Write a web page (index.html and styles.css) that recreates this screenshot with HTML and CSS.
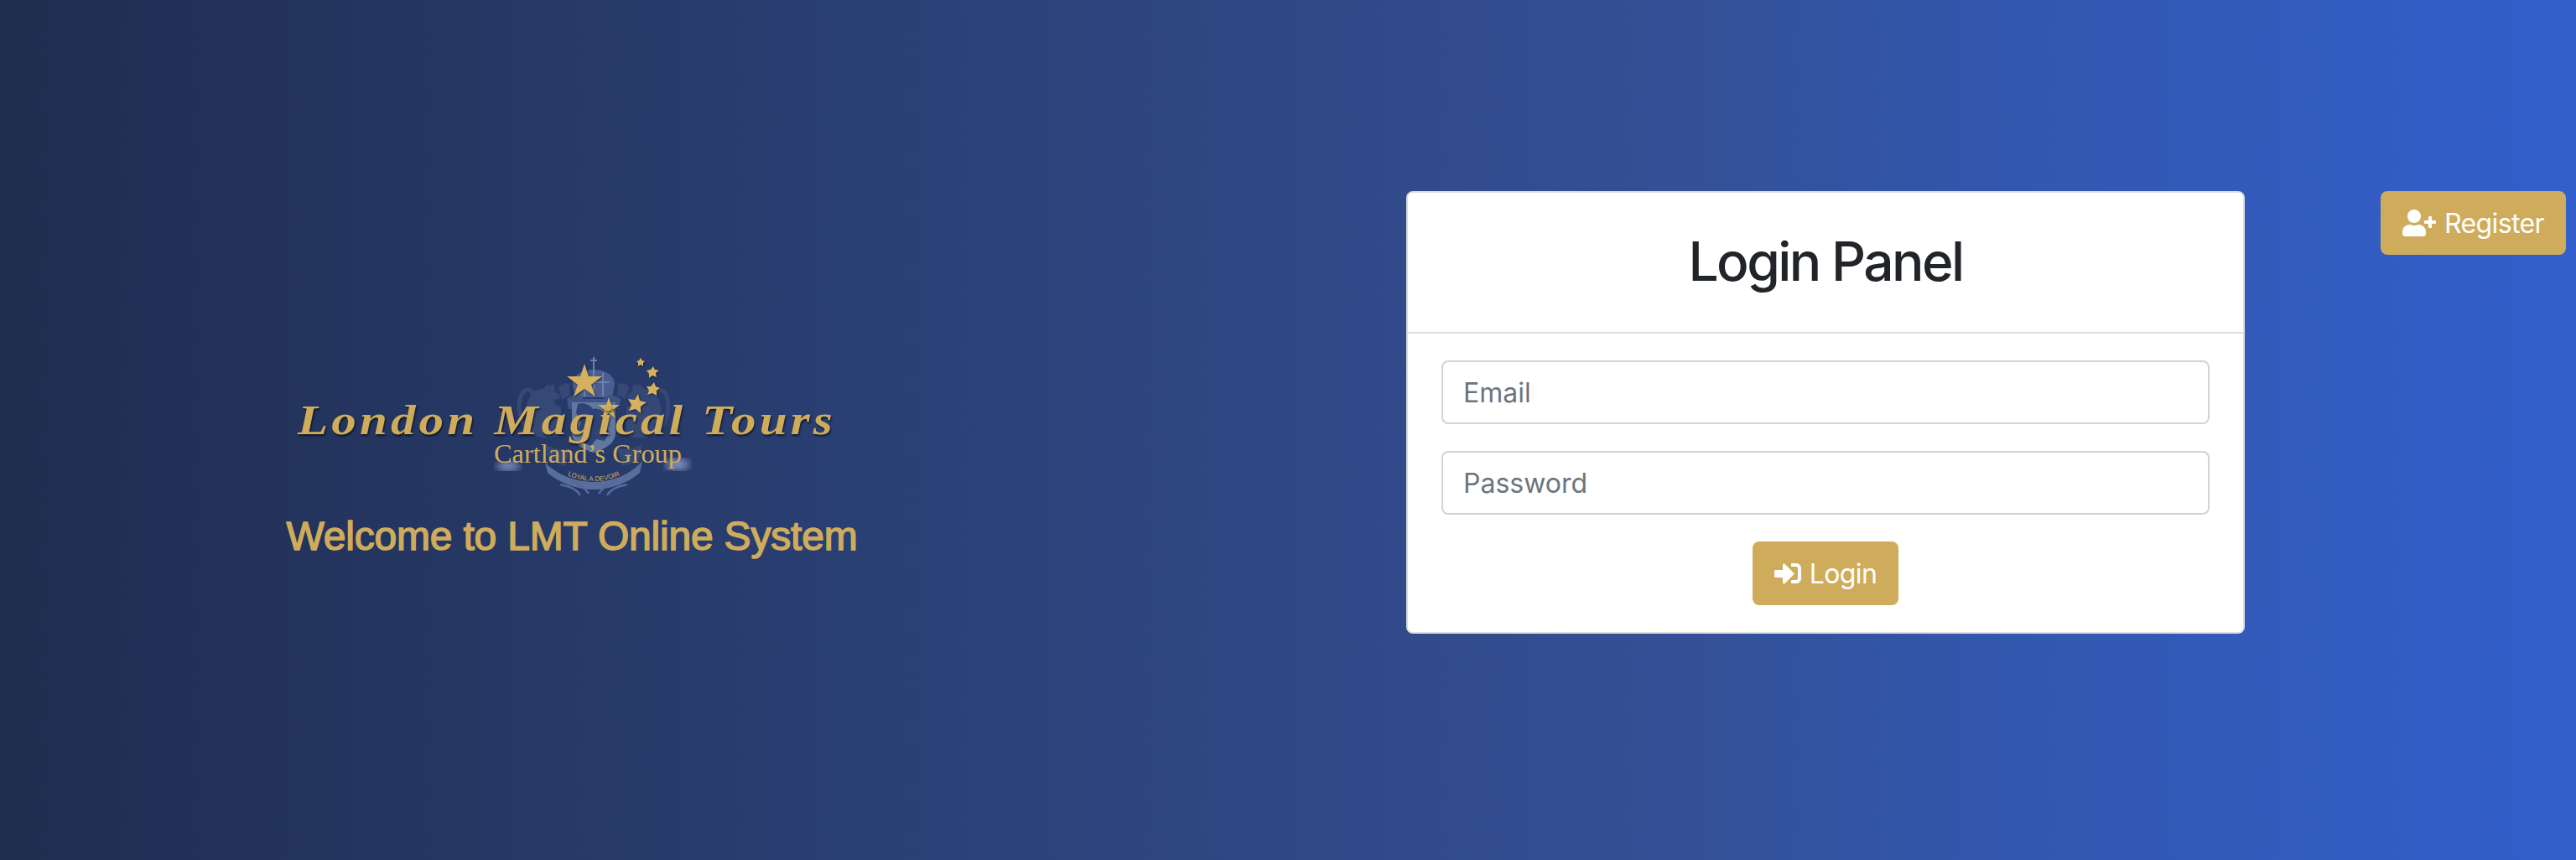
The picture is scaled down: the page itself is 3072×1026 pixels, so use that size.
FILE: index.html
```html
<!DOCTYPE html>
<html lang="en">
<head>
<meta charset="UTF-8">
<meta name="viewport" content="width=device-width, initial-scale=1.0">
<title>LMT Online System</title>
<link rel="stylesheet" href="styles.css">
</head>
<body>

<div class="page">
    <div class="brand">
        <svg class="logo" viewBox="345 420 660 180" width="660" height="180">
            <defs>
                <g id="lion">
                    <path d="M650 462l3-4 3 3 3-3 3 4-1 5c6 2 8 6 6 9l-6 1c-1 5 4 8 8 9v34c-10 2-20 4-30 0l-8-4 6-10c-10-8-12-18-6-30 2-8 8-12 16-12z"/>
                    <path class="tail" d="M632 512c-16-8-16-40-6-46 6-3 10 2 10 8"/>
                    <path d="M666 462c3-4 9-6 13-4l1 14-10 4z"/>
                    <path d="M650 530c10 6 24 8 30 4l-6 22-20-6z"/>
                </g>
                <filter id="blur"><feGaussianBlur stdDeviation="5"/></filter>
                <path id="motto" d="M656 553c15 13 32 21 52 21s37-8 52-21"/>
            </defs>

            <!-- crest -->
            <g class="crest">
                <use href="#lion"/>
                <use href="#lion" transform="translate(1416 0) scale(-1 1)"/>
                <path class="crown" d="M683 458c0-10 11-17 25-17s25 7 25 17l-3 16h-44z"/>
                <path class="crown-line" d="M708 426v15M704 430h8M689 456h38M697 445v28M708 441v32M719 445v28"/>
                <path class="mantle" d="M676 476c8-6 16-6 20 0h24c4-6 12-6 20 0l-2 12h-60z"/>
                <path class="shield" d="M682 480h52v36c0 14-14 20-26 24-12-4-26-10-26-24z"/>
                <path class="shield-lion" d="M689 482c6-2 14 0 18 6 8-2 16 4 18 12l-6 6 8 10-6 10-10-2-6 8-10-4 2-10-8-6 4-8-6-12z"/>
                <path class="ribbon" d="M650 552c14 14 36 23 58 23s44-9 58-25l-3 14c-14 12-34 20-55 20s-41-8-55-20z"/>
                <path class="scroll" d="M668 578c12 2 20 6 24 13M680 574c10 3 18 8 22 15M748 578c-12 2-20 6-24 13M736 574c-10 3-18 8-22 15"/>
            </g>
            <ellipse class="glow" cx="606" cy="556" rx="14" ry="5" filter="url(#blur)"/>
            <ellipse class="glow" cx="808" cy="554" rx="14" ry="6" filter="url(#blur)"/>

            <text class="motto"><textPath href="#motto" startOffset="50%" text-anchor="middle">LOYAL A DEVOIR</textPath></text>

            <!-- stars -->
            <g class="stars">
                <polygon points="697,434 702,449 718,449 705,459 710,473 697,464 684,473 689,459 676,449 692,449"/>
                <polygon points="726,474 729,483 739,483 731,489 734,499 726,493 718,499 721,489 713,483 723,483"/>
                <polygon points="761,470 763,478 771,480 764,485 764,493 758,488 750,490 753,483 749,476 757,477"/>
                <polygon points="780,456 782,461 787,463 783,466 783,472 778,469 772,471 774,466 771,461 776,461"/>
                <polygon points="779,437 781,441 786,442 782,445 783,450 778,448 774,451 774,446 771,442 776,441"/>
                <polygon points="764,427 766,430 769,431 767,433 767,437 764,435 761,437 761,433 759,431 762,430"/>
            </g>

            <text class="logo-name" x="355" y="518" textLength="642" lengthAdjust="spacingAndGlyphs">London Magical Tours</text>
            <text class="logo-group" x="589" y="552" textLength="224" lengthAdjust="spacingAndGlyphs">Cartland’s Group</text>
        </svg>
        <h3 class="welcome">Welcome to LMT Online System</h3>
    </div>

    <div class="panel">
        <div class="card-head">
            <h2>Login Panel</h2>
        </div>
        <form class="card-body">
            <input type="email" class="field" placeholder="Email">
            <input type="password" class="field" placeholder="Password">
            <button type="submit" class="gold-btn">
                <svg class="icon login-icon" viewBox="0 0 512 512"><path d="M416 448h-84c-6.600 0-12-5.400-12-12v-40c0-6.600 5.400-12 12-12h84c17.700 0 32-14.300 32-32V160c0-17.700-14.300-32-32-32h-84c-6.600 0-12-5.400-12-12V76c0-6.600 5.400-12 12-12h84c53 0 96 43 96 96v192c0 53-43 96-96 96zm-47-201L201 79c-15-15-41-4.500-41 17v96H24c-13.300 0-24 10.700-24 24v96c0 13.300 10.700 24 24 24h136v96c0 21.500 26 32 41 17l168-168c9.300-9.400 9.300-24.600 0-34z"/></svg>
                Login
            </button>
        </form>
    </div>

    <button type="button" class="gold-btn register">
        <svg class="icon user-icon" viewBox="0 0 640 512"><path d="M624 208h-64v-64c0-8.800-7.200-16-16-16h-32c-8.800 0-16 7.200-16 16v64h-64c-8.800 0-16 7.200-16 16v32c0 8.800 7.200 16 16 16h64v64c0 8.800 7.200 16 16 16h32c8.800 0 16-7.200 16-16v-64h64c8.800 0 16-7.200 16-16v-32c0-8.800-7.200-16-16-16zm-400 48c70.700 0 128-57.300 128-128S294.700 0 224 0 96 57.300 96 128s57.300 128 128 128zm89.600 32h-16.700c-22.200 10.200-46.900 16-72.900 16s-50.600-5.800-72.900-16h-16.700C60.200 288 0 348.200 0 422.400V464c0 26.500 21.500 48 48 48h352c26.500 0 48-21.500 48-48v-41.600c0-74.200-60.200-134.400-134.400-134.400z"/></svg>
        Register
    </button>
</div>

</body>
</html>
```

FILE: styles.css
```css
* {
    box-sizing: border-box;
}
body {
    margin: 0;
    font-family: Inter, "Liberation Sans", sans-serif;
    background: linear-gradient(to right, #1f2d50, #2a3f73 33%, #345096 65%, #3257ae 78%, #325fcc);
}
.page {
    display: flex;
    align-items: flex-start;
    height: 1026px;
    overflow: hidden;
}

/* left side */
.brand {
    width: 1364px;
    flex-shrink: 0;
    padding-top: 420px;
    text-align: center;
}
.logo {
    display: block;
    margin: 0 0 0 345px;
}
.welcome {
    margin: 11px 0 0;
    font-family: "Liberation Sans", sans-serif;
    font-size: 48px;
    font-weight: 400;
    letter-spacing: -0.2px;
    line-height: 58px;
    color: #cfac5c;
    -webkit-text-stroke: 1.5px #cfac5c;
}
.crest {
    fill: #354876;
}
.tail {
    fill: none;
    stroke: #354876;
    stroke-width: 5;
}
.crown {
    fill: #4a5f90;
}
.crown-line {
    fill: none;
    stroke: #6d81ae;
    stroke-width: 2;
}
.mantle {
    fill: #3f5484;
}
.shield {
    fill: #62779f;
}
.shield-lion {
    fill: #2f4274;
}
.ribbon {
    fill: #5a6e9d;
}
.scroll {
    fill: none;
    stroke: #56699a;
    stroke-width: 2.5;
}
.glow {
    fill: #8a9dc8;
}
.motto {
    font-family: "Liberation Sans", sans-serif;
    font-size: 8px;
    fill: #cfac5c;
}
.stars {
    fill: #d4b05f;
    filter: drop-shadow(1px 1px 1px rgba(0, 0, 0, 0.5));
}
.logo-name {
    font-family: "Liberation Serif", serif;
    font-size: 50px;
    font-weight: 700;
    font-style: italic;
    letter-spacing: 3.5px;
    fill: #cfac5c;
    filter: drop-shadow(1px 2px 1px rgba(0, 0, 0, 0.6));
}
.logo-group {
    font-family: "Liberation Serif", serif;
    font-size: 32px;
    fill: #cfac5c;
}

/* login card */
.panel {
    width: 1000px;
    margin: 228px 0 0 313px;
    flex-shrink: 0;
    background: #fff;
    border: 2px solid rgba(0, 0, 0, 0.125);
    border-radius: 8px;
}
.card-head {
    height: 168px;
    padding-bottom: 4px;
    display: flex;
    align-items: center;
    justify-content: center;
    border-bottom: 2px solid rgba(0, 0, 0, 0.125);
}
.card-head h2 {
    margin: 0;
    font-size: 64px;
    font-weight: 550;
    letter-spacing: -2.6px;
    color: #212529;
}
.card-body {
    display: flex;
    flex-direction: column;
    align-items: center;
    gap: 32px;
    padding: 32px 40px 32px;
}
.field {
    width: 100%;
    height: 76px;
    padding: 0 24px;
    border: 2px solid #ced4da;
    border-radius: 8px;
    font-family: inherit;
    font-size: 32px;
    color: #495057;
}
.field::placeholder {
    color: #6c757d;
    opacity: 1;
}
.gold-btn {
    display: flex;
    align-items: center;
    justify-content: center;
    gap: 10px;
    height: 76px;
    padding: 0 24px;
    border: 2px solid #cfac5c;
    border-radius: 8px;
    background: #cfac5c;
    color: #fff;
    font-family: inherit;
    font-size: 32px;
    letter-spacing: -0.6px;
    cursor: pointer;
}
.icon {
    fill: #fff;
    flex-shrink: 0;
}
.login-icon {
    width: 32px;
    height: 32px;
}
.user-icon {
    width: 40px;
    height: 32px;
}

/* register */
.register {
    margin: 228px 0 0 162px;
    width: 221px;
}
```
